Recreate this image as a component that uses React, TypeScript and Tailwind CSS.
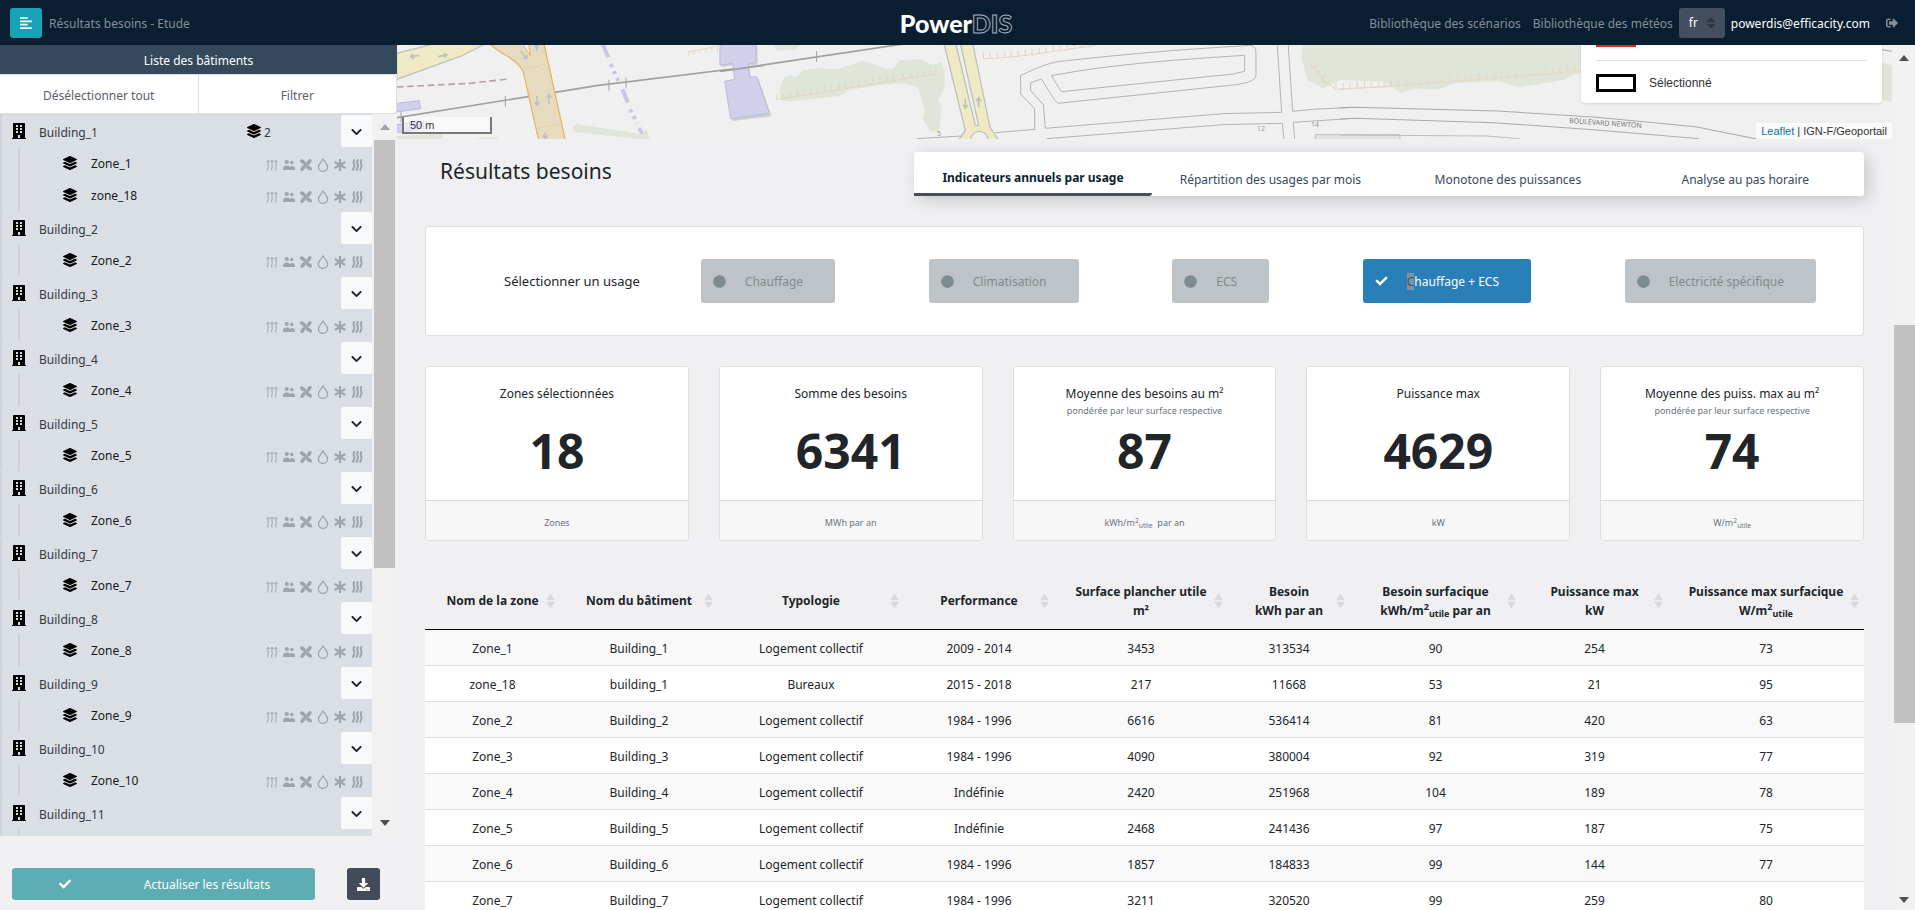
import React, { useState } from 'react';
import {
  FaAlignLeft,
  FaBuilding,
  FaCheck,
  FaChevronDown,
  FaCircle,
  FaDownload,
  FaLayerGroup,
  FaSignOutAlt,
  FaSort,
} from 'react-icons/fa';

interface Building {
  name: string;
  zones: string[];
}

const BUILDINGS: Building[] = [
  { name: 'Building_1', zones: ['Zone_1', 'zone_18'] },
  { name: 'Building_2', zones: ['Zone_2'] },
  { name: 'Building_3', zones: ['Zone_3'] },
  { name: 'Building_4', zones: ['Zone_4'] },
  { name: 'Building_5', zones: ['Zone_5'] },
  { name: 'Building_6', zones: ['Zone_6'] },
  { name: 'Building_7', zones: ['Zone_7'] },
  { name: 'Building_8', zones: ['Zone_8'] },
  { name: 'Building_9', zones: ['Zone_9'] },
  { name: 'Building_10', zones: ['Zone_10'] },
  { name: 'Building_11', zones: [] },
];

const TABS = [
  'Indicateurs annuels par usage',
  'Répartition des usages par mois',
  'Monotone des puissances',
  'Analyse au pas horaire',
];

const USAGES = ['Chauffage', 'Climatisation', 'ECS', 'Chauffage + ECS', 'Electricité spécifique'];

const M2Utile = () => (
  <>
    m<sup>2</sup>
    <sub>utile</sub>
  </>
);

interface Stat {
  title: string;
  note?: string;
  value: string;
  unit: React.ReactNode;
}

const STATS: Stat[] = [
  { title: 'Zones sélectionnées', value: '18', unit: 'Zones' },
  { title: 'Somme des besoins', value: '6341', unit: 'MWh par an' },
  {
    title: 'Moyenne des besoins au m²',
    note: 'pondérée par leur surface respective',
    value: '87',
    unit: <>kWh/<M2Utile />&nbsp; par an</>,
  },
  { title: 'Puissance max', value: '4629', unit: 'kW' },
  {
    title: 'Moyenne des puiss. max au m²',
    note: 'pondérée par leur surface respective',
    value: '74',
    unit: <>W/<M2Utile /></>,
  },
];

const COLUMNS: { label: string; unit?: React.ReactNode; width: string }[] = [
  { label: 'Nom de la zone', width: 'w-[135px]' },
  { label: 'Nom du bâtiment', width: 'w-[158px]' },
  { label: 'Typologie', width: 'w-[186px]' },
  { label: 'Performance', width: 'w-[150px]' },
  { label: 'Surface plancher utile', unit: 'm²', width: 'w-[174px]' },
  { label: 'Besoin', unit: 'kWh par an', width: 'w-[122px]' },
  { label: 'Besoin surfacique', unit: <>kWh/<M2Utile /> par an</>, width: 'w-[171px]' },
  { label: 'Puissance max', unit: 'kW', width: 'w-[147px]' },
  { label: 'Puissance max surfacique', unit: <>W/<M2Utile /></>, width: 'w-[196px]' },
];

const ROWS = [
  ['Zone_1', 'Building_1', 'Logement collectif', '2009 - 2014', '3453', '313534', '90', '254', '73'],
  ['zone_18', 'building_1', 'Bureaux', '2015 - 2018', '217', '11668', '53', '21', '95'],
  ['Zone_2', 'Building_2', 'Logement collectif', '1984 - 1996', '6616', '536414', '81', '420', '63'],
  ['Zone_3', 'Building_3', 'Logement collectif', '1984 - 1996', '4090', '380004', '92', '319', '77'],
  ['Zone_4', 'Building_4', 'Logement collectif', 'Indéfinie', '2420', '251968', '104', '189', '78'],
  ['Zone_5', 'Building_5', 'Logement collectif', 'Indéfinie', '2468', '241436', '97', '187', '75'],
  ['Zone_6', 'Building_6', 'Logement collectif', '1984 - 1996', '1857', '184833', '99', '144', '77'],
  ['Zone_7', 'Building_7', 'Logement collectif', '1984 - 1996', '3211', '320520', '99', '259', '80'],
];

// --- Usage icons ---

const HeatIcon = () => (
  <svg className="w-3 h-3" viewBox="0 0 12 12" fill="none" stroke="currentColor" strokeWidth="1">
    <path d="M2 11.5c-1.400-2 1.200-3.500 0-5.500V1.500M6 11.500c-1.400-2 1.200-3.500 0-5.500V1.500M10 11.500c-1.400-2 1.200-3.500 0-5.500V1.500" />
    <path d="M.5 3 2 1.200 3.500 3M4.500 3 6 1.200 7.500 3M8.500 3 10 1.200 11.500 3" />
  </svg>
);

const PeopleIcon = () => (
  <svg className="w-3 h-3" viewBox="0 0 12 12" fill="currentColor">
    <circle cx="3.800" cy="3" r="2.100" />
    <circle cx="8.800" cy="3.500" r="1.800" />
    <path d="M0 11V9.500c0-1.800 1.600-3 3.800-3 1.400 0 2.500.6 3.200 1.500.6-.7 1.200-1 2-1 1.800 0 3 1 3 2.500V11Z" />
  </svg>
);

const FanIcon = () => (
  <svg className="w-3 h-3" viewBox="0 0 12 12" fill="currentColor">
    <ellipse cx="3" cy="3" rx="3.400" ry="1.900" transform="rotate(35 3 3)" />
    <ellipse cx="9" cy="3" rx="3.400" ry="1.900" transform="rotate(125 9 3)" />
    <ellipse cx="9" cy="9" rx="3.400" ry="1.900" transform="rotate(35 9 9)" />
    <ellipse cx="3" cy="9" rx="3.400" ry="1.900" transform="rotate(125 3 9)" />
    <circle cx="6" cy="6" r="1.800" />
  </svg>
);

const DropIcon = () => (
  <svg className="w-3 h-3.5" viewBox="0 0 12 14" fill="none" stroke="currentColor" strokeWidth="1.300">
    <path d="M6 1C4.500 3.800 1.400 6 1.400 9a4.600 4.400 0 0 0 9.200 0C10.600 6 7.500 3.800 6 1Z" />
  </svg>
);

const ColdIcon = () => (
  <svg className="w-3 h-3" viewBox="0 0 12 12" fill="none" stroke="currentColor" strokeWidth="2.100">
    <path d="M6 0v12M.7 3l10.600 6M11.300 3 .7 9" />
  </svg>
);

const WavesIcon = () => (
  <svg className="w-3 h-3" viewBox="0 0 12 12" fill="none" stroke="currentColor" strokeWidth="2">
    <path d="M3.600.3c-2.800 3.200.6 4.600-.4 7.400-.4 1.400-1 2.500-1.600 4M7.200.3c-2.800 3.200.6 4.600-.4 7.400-.4 1.400-1 2.500-1.600 4M10.800.3c-2.800 3.200.6 4.600-.4 7.400-.4 1.400-1 2.500-1.600 4" />
  </svg>
);

const Arrow = ({ up, className }: { up?: boolean; className: string }) => (
  <svg className={`w-2.5 h-1.5 shrink-0 ${className}`} viewBox="0 0 10 6" fill="currentColor">
    <path d={up ? 'M0 6 5 0l5 6Z' : 'M0 0h10L5 6Z'} />
  </svg>
);

// --- Layout parts ---

const Header = () => (
  <header className="h-[45px] shrink-0 bg-[#0a1e32] flex items-center text-xs text-[#848f99]">
    <div className="flex-1 flex items-center gap-[7px] pl-2.5">
      <button
        aria-label="Menu"
        className="w-8 h-[30px] rounded-[3px] bg-[#17a2b8] text-white flex items-center justify-center"
      >
        <FaAlignLeft className="w-3 h-3.5" />
      </button>
      <span className="pt-0.5">Résultats besoins - Etude</span>
    </div>
    <a href="#" className="pl-1 pt-0.5 font-[Lato] text-[25px] leading-none font-black text-white">
      Power<span className="text-[#0a1e32] [-webkit-text-stroke:1px_#a3adb7]">DIS</span>
    </a>
    <nav className="flex-1 flex items-center justify-end pr-[17px]">
      <a href="#" className="mr-3 pt-0.5">Bibliothèque des scénarios</a>
      <a href="#" className="pt-0.5">Bibliothèque des météos</a>
      <div className="relative mx-1.5">
        <select
          aria-label="Langue"
          defaultValue="fr"
          className="appearance-none w-[46px] h-[30px] pl-2.5 rounded-[3px] bg-[#444e5e] text-white"
        >
          <option value="fr">fr</option>
          <option value="en">en</option>
        </select>
        <FaSort className="absolute right-2 top-2 w-3 h-3.5 text-[#2f3640] pointer-events-none" />
      </div>
      <a href="#" className="text-white mr-4 pt-0.5">powerdis@efficacity.com</a>
      <button aria-label="Déconnexion">
        <FaSignOutAlt className="w-3 h-3" />
      </button>
    </nav>
  </header>
);

const ZoneRow = ({ name }: { name: string }) => (
  <li className="ml-[18px] h-8 border-l-2 border-[#d0d1d2] flex items-center pl-[43px] pr-[9px]">
    <FaLayerGroup className="w-3.5 h-3.5 text-black" />
    <span className="ml-3.5 flex-1 pt-0.5 text-[#16191c]">{name}</span>
    <span className="flex items-center gap-[5px] text-[#a0a4ab] pt-1">
      <HeatIcon />
      <PeopleIcon />
      <FanIcon />
      <DropIcon />
      <ColdIcon />
      <WavesIcon />
    </span>
  </li>
);

const Sidebar = () => (
  <aside className="w-[397px] shrink-0 flex flex-col text-xs">
    <h2 className="h-[29px] shrink-0 pt-0.5 bg-[#34495e] text-white flex items-center justify-center">
      Liste des bâtiments
    </h2>
    <div className="h-10 shrink-0 flex bg-white text-[#5a6067] border border-l-0 border-[#dedfe1] rounded-r">
      <button className="flex-1 pt-1 border-r border-[#dedfe1]">Désélectionner tout</button>
      <button className="flex-1 pt-1">Filtrer</button>
    </div>
    <div className="flex-1 min-h-0 flex">
      <ul className="flex-1 overflow-hidden bg-[#dadfe6] pt-px shadow-[inset_2px_0_2px_rgba(0,0,0,0.06)]">
        {BUILDINGS.map((building) => (
          <li key={building.name} className="border-b border-[#dcdfe2]">
            <div className="h-8 flex items-center pl-3">
              <FaBuilding className="w-3.5 h-4 text-black" />
              <span className="ml-[13px] w-[208px] pt-[3px] text-[#343a40]">{building.name}</span>
              {building.zones.length > 1 && (
                <span className="flex items-center gap-[3px] text-[#343a40]">
                  <FaLayerGroup className="w-3.5 h-3.5 text-black" />
                  <span className="pt-[3px]">{building.zones.length}</span>
                </span>
              )}
              <button
                aria-label={`Replier ${building.name}`}
                className="ml-auto w-[31px] h-8 pt-0.5 rounded-xs bg-[#f8f9fa] text-[#212529] flex items-center justify-center"
              >
                <FaChevronDown className="w-[11px] h-3" />
              </button>
            </div>
            {building.zones.length > 0 ? (
              <ul>
                {building.zones.map((zone) => (
                  <ZoneRow key={zone} name={zone} />
                ))}
              </ul>
            ) : (
              <div className="ml-[18px] h-8 border-l-2 border-[#d0d1d2]" />
            )}
          </li>
        ))}
      </ul>
      <div className="w-[25px] shrink-0 bg-[#f1f1f1] flex flex-col items-center py-2.5">
        <Arrow up className="text-[#a3a3a3]" />
        <div className="mt-2.5 w-[21px] h-[61%] bg-[#c1c1c1]" />
        <Arrow className="mt-auto text-[#505050]" />
      </div>
    </div>
    <div className="h-[74px] shrink-0 flex items-center gap-8 pl-3 pt-[22px]">
      <button className="w-[303px] h-8 rounded-[3px] bg-[#5cadb4] text-white flex items-center">
        <FaCheck className="ml-[47px] w-3 h-3" />
        <span className="flex-1 pl-7 pt-0.5 text-center">Actualiser les résultats</span>
      </button>
      <button
        aria-label="Télécharger"
        className="w-[33px] h-8 rounded-[3px] bg-[#414b5b] text-white flex items-center justify-center"
      >
        <FaDownload className="w-[13px] h-[13px]" />
      </button>
    </div>
  </aside>
);

const MapView = () => (
  <div className="relative h-[94px] mr-px overflow-hidden bg-[#f0f0f0]">
    <svg className="absolute inset-0 w-full h-full" viewBox="0 0 1495 94" preserveAspectRatio="xMinYMin slice" fill="none">
      {/* western part: bridges, railway and avenue */}
      <g transform="translate(-7 -5) scale(.3333)">
        <path d="M20 40 130 12H285L215 48 20 118Z" fill="#eeebc4" stroke="#c0c0c0" strokeWidth="4" />
        <path d="M20 141 240 130 355 117" stroke="#b5a1a5" strokeWidth="5" strokeDasharray="20 11" />
        <path d="M20 190 88 182 92 206 20 216ZM20 254 98 244 102 266 20 278Z" fill="#d0d0ea" stroke="#b9b9e6" strokeWidth="3" />
        <path d="M20 233 620 137 1100 78 1540 12" stroke="#a0a0a0" strokeWidth="5" />
        <path d="M33 215v32M346 168v32M657 120v32M708 113v32M1280 34v32" stroke="#a0a0a0" strokeWidth="3" />
        <path d="M300 12C340 50 375 50 400 95L446 300H526L462 12Z" fill="#e8dcc0" stroke="#e5b766" strokeWidth="4" />
        <path d="M400 16 422 48 416 12" fill="#f0f0f0" stroke="#e5b766" strokeWidth="3" />
        <path d="M404 88 466 72M440 266 516 250" stroke="#e5c8a0" strokeWidth="2" />
        <path
          d="M441 168v26m-7-8 7 10 8-10M477 192v-26m-8 8 8-10 7 10M392 34l18 20m-12 0 12 2 0-12M440 34V14m-6 8 6-8 6 8M466 276v18m-7-8 7 10 8-10M88 46 62 50m8-8-8 8 10 6M144 50l26-5m-9-5 10 5-8 8"
          stroke="#c0c0c8"
          strokeWidth="5"
        />
        <path d="M638 12 655 52M697 148 714 188M748 264 764 298" stroke="#c9c7de" strokeWidth="12" />
        <path d="M662 72 690 134M720 208 742 250" stroke="#c9c7de" strokeWidth="12" strokeDasharray="10 13" />
        <path d="m548 262 12-10 170 26 30 4 8-16 12 30H740L552 276ZM20 288l136-6v18H20ZM250 298l30-6h42v8ZM1150 12h80l-10 16-60 4Z" fill="#dfe5d9" />
        <path d="M994 14V76L1030 70 1036 118 1008 122 1024 238 1142 224 1102 110 1080 112 1074 72 1100 68V14Z" fill="#cfcfcf" transform="translate(3 5)" />
        <path d="M990 12V76L1028 70 1034 118 1004 124 1022 236 1138 220 1100 110 1080 112 1074 72 1098 66V12Z" fill="#d0d0ea" stroke="#b9b9e6" strokeWidth="3" />
        <path d="M990 94 1120 76" stroke="#a0a0a0" strokeWidth="5" />
        <path d="M897 50 894 36 985 18M912 33v10M930 29v10M948 26v10M966 22v10M982 20v16" stroke="#e3d4c2" strokeWidth="3" />
        <path d="M1170 180V140L1184 112 1204 106 1218 112 1240 90 1290 84 1340 88 1420 62 1480 84 1510 86 1530 62H1570V128L1460 136 1380 150 1350 168 1200 184Z" fill="#dfe5d9" />
        <path
          d="M1158 178 1330 152 1560 114M1160 178v-14M1180 176v-14M1201 172v-16M1221 170v-18M1242 166v-20M1262 163v-20M1283 160v-20M1303 156v-18M1324 153v-18M1346 149v-18M1366 146v-18M1386 142v-18M1408 138v-18M1428 135v-18M1450 132v-18M1470 128v-18M1490 125v-18M1510 122v-18M1532 118v-18M1552 115v-18"
          stroke="#e3d4c2"
          strokeWidth="3"
        />
      </g>
      {/* central part: dual road, car park and crossing */}
      <g transform="translate(503 -45) scale(.3333)">
        <path d="M0 180 60 178 98 196 122 186 134 210V264L114 300 124 322 118 394H92L68 358 74 330 54 262 0 248Z" fill="#dfe5d9" />
        <path d="M0 238 110 222M10 236v-14M32 233v-16M52 230v-16M74 227v-16M92 225v-16M108 222v-16" stroke="#e3d4c2" strokeWidth="3" />
        <path d="M132 130 196 392 176 420H296L270 382 218 130Z" fill="#eeebc4" stroke="#c0c0c0" strokeWidth="4" />
        <path d="M168 134 226 376H236L182 134" fill="#f0f0f0" stroke="#c0c0c0" strokeWidth="4" />
        <path d="M212 420a26 26 0 0 1 52 0" fill="#f0f0f0" stroke="#c0c0c0" strokeWidth="4" />
        <path d="M196 296v26m-7-8 7 10 8-10M236 322v-26m-8 8 8-10 7 10" stroke="#c0c0c0" strokeWidth="5" />
        <path d="M50 416 186 408M286 398 404 388V326L362 282V226C430 196 450 186 500 182 700 160 850 148 1040 137 1058 134 1068 140 1068 160V226C1066 244 1040 248 1010 254L474 310 464 300 424 237 392 248V272L430 314 436 385 970 341 1145 337 1132 136" stroke="#b3b3b3" strokeWidth="3" />
        <path d="M454 227C650 190 850 178 1034 166V214L1000 222 484 275ZM440 416 970 374 1147 370 1152 418M1165 136 1178 334 1240 328 1360 322M1184 418 1180 367 1350 356" stroke="#b3b3b3" strokeWidth="3" />
        <path
          d="M250 156V176C350 174 440 156 585 137M270 174v-17M292 174v-17M314 173v-17M334 171v-17M355 169v-17M376 166v-17M396 164v-17M418 161v-17M438 158v-17M460 155v-17M480 152v-14M502 149v-12M524 145v-9M544 142v-7"
          stroke="#e6d3bd"
          strokeWidth="3"
        />
        <path d="M1208 134 1204 170 1222 240 1268 264 1322 240 1440 244V134Z" fill="#dfe5d9" />
        <path
          d="M1232 190 1276 246 1310 268 1500 258M1240 206 1254 196M1252 220 1264 208M1264 236 1278 222M1280 250 1290 238M1308 266v-18M1330 266v-18M1350 265v-18M1372 264v-18M1394 263v-18M1414 262v-18M1436 261v-18M1456 260v-18M1478 259v-18"
          stroke="#e3d4c2"
          strokeWidth="3"
        />
        <path d="M1246 420V404H1500V420Z" fill="#e2e2e2" stroke="#bdbdbd" strokeWidth="3" />
      </g>
      {/* eastern part: woods and boulevard */}
      <g transform="translate(943 -45) scale(.3667 .3333)">
        <path d="M20 134V240L120 244 165 278 210 266 268 268 320 248 430 244 490 262 610 240 640 222H700V134ZM1470 186 1505 196V302H1470Z" fill="#dfe5d9" />
        <path
          d="M0 268 250 250 660 214M120 260v-18M140 258v-18M160 257v-18M180 255v-18M200 254v-18M220 252v-18M240 251v-18M260 249v-18M280 247v-18M300 246v-18M320 244v-18M340 242v-18M360 240v-18M380 238v-18M400 236v-18M420 234v-18M440 232v-18M460 231v-18M480 229v-18M500 227v-18M520 225v-18M540 223v-18M560 222v-18M580 220v-18M600 218v-18M620 216v-18M640 214v-18"
          stroke="#e6d8c6"
          strokeWidth="3"
        />
        <path d="M0 323 40 322 430 333 700 352 970 380 1140 418M0 357 40 355 420 368 700 390 980 416M1478 149 1505 154" stroke="#aaaaaa" strokeWidth="3" />
        <path d="M0 405 400 408 490 416" stroke="#bdbdbd" strokeWidth="3" />
      </g>
      <g fill="#9f978e" className="text-[7px]">
        <text x="540" y="91">5</text>
        <text x="860" y="86">12</text>
        <text x="914" y="82">14</text>
        <text x="1172" y="78" fill="#777" transform="rotate(4 1172 78)">BOULEVARD NEWTON</text>
      </g>
    </svg>
    <div className="absolute left-[5px] bottom-[5px] w-[90px] h-[17px] border-2 border-t-0 border-[#777] bg-white/50 pl-1.5 font-['Liberation_Sans'] text-[11px] leading-4 text-[#333]">
      50 m
    </div>
    <div className="absolute top-0 right-2.5 w-[301px] h-[58px] rounded-b bg-white shadow-sm px-[15px] font-['Liberation_Sans'] text-xs text-[#333]">
      <div className="w-10 h-0.5 bg-[#e02b27]" />
      <hr className="mt-[13px] border-[#e2e2e2]" />
      <div className="mt-[13px] flex items-center gap-[13px]">
        <span className="w-10 h-[18px] border-[3px] border-black" />
        Sélectionné
      </div>
    </div>
    <div className="absolute right-0 bottom-0 h-4 px-[5px] bg-white/70 font-['Liberation_Sans'] text-[11px] leading-4 text-[#333]">
      <a href="#" className="text-[#0078a8]">Leaflet</a> | IGN-F/Geoportail
    </div>
  </div>
);

const StatCard = ({ title, note, value, unit }: Stat) => (
  <div className="h-[175px] rounded-[3px] border border-[#dfdfdf] bg-white flex flex-col text-center overflow-hidden">
    <div className="flex-1 pt-[18px]">
      <p className="text-xs leading-[18px] text-[#212529]">{title}</p>
      <p className="h-4 text-[9px] leading-4 text-[#6c757d]">{note}</p>
      <p className="mt-1.5 text-5xl leading-[52px] font-bold text-[#212529]">{value}</p>
    </div>
    <div className="h-10 pt-0.5 border-t border-[#d9d9d9] bg-[#f7f7f7] text-[9px] leading-10 text-[#6c757d]">{unit}</div>
  </div>
);

const ResultsTable = () => (
  <table className="mt-8 w-full table-fixed border-collapse text-xs text-center text-[#212529]">
    <thead>
      <tr className="h-[56px] border-b border-black">
        {COLUMNS.map((col) => (
          <th key={col.label} className={`relative p-0 font-bold leading-[19px] ${col.width}`}>
            {col.label}
            {col.unit && <div>{col.unit}</div>}
            <span className="absolute right-[5px] top-1/2 -translate-y-1/2 flex flex-col gap-px text-[#d9d9db]">
              <svg className="w-[9px] h-[7px]" viewBox="0 0 8 7" preserveAspectRatio="none" fill="currentColor">
                <path d="M0 7 4 0l4 7Z" />
              </svg>
              <svg className="w-[9px] h-[7px]" viewBox="0 0 8 7" preserveAspectRatio="none" fill="currentColor">
                <path d="M0 0h8L4 7Z" />
              </svg>
            </span>
          </th>
        ))}
      </tr>
    </thead>
    <tbody>
      {ROWS.map((row) => (
        <tr key={row[0]} className="h-9 border-b border-[#dcdddf] odd:bg-[#f9f9f9] even:bg-white">
          {row.map((cell, i) => (
            <td key={i} className="p-0 pt-1">{cell}</td>
          ))}
        </tr>
      ))}
    </tbody>
  </table>
);

export default function App() {
  const [tab, setTab] = useState(TABS[0]);
  const [usage, setUsage] = useState('Chauffage + ECS');

  return (
    <div className="h-screen flex flex-col overflow-hidden bg-[#f0f0f3] font-['Noto_Sans',sans-serif]">
      <Header />
      <div className="flex-1 min-h-0 flex">
        <Sidebar />
        <main className="flex-1 min-w-0 overflow-hidden">
          <MapView />
          <div className="pl-7 pr-[29px]">
            <div className="pt-[13px] flex items-start justify-between">
              <h1 className="pl-[15px] pt-[3px] text-[21px] leading-8 text-[#212529]">Résultats besoins</h1>
              <div role="tablist" className="w-[66%] h-11 flex bg-white rounded-[3px] text-xs shadow-[4px_4px_16px_rgba(0,0,0,0.18)]">
                {TABS.map((label) => (
                  <button
                    key={label}
                    role="tab"
                    aria-selected={tab === label}
                    onClick={() => setTab(label)}
                    className={
                      tab === label
                        ? 'flex-1 pt-2.5 border-b-3 border-[#444e5e] rounded-br-[3px] font-bold text-[#0a1e32]'
                        : 'flex-1 pt-3 text-[#34495e]'
                    }
                  >
                    {label}
                  </button>
                ))}
              </div>
            </div>

            <div className="mt-[30px] h-[110px] rounded-[3px] border border-[#dfdfdf] bg-white flex items-center pl-[78px] pr-[47px] text-xs">
              <span className="pt-0.5 text-[13px] text-[#212529]">Sélectionner un usage</span>
              <div className="ml-[61px] flex-1 flex justify-between">
                {USAGES.map((label) => {
                  const active = usage === label;
                  return (
                    <button
                      key={label}
                      aria-pressed={active}
                      onClick={() => setUsage(label)}
                      className={`h-11 pl-3 pr-8 rounded-[3px] flex items-center gap-[19px] ${
                        active ? 'bg-[#2980b9] text-white' : 'bg-[#bdc3c7] text-[#7f8c8d]'
                      }`}
                    >
                      {active ? <FaCheck className="w-[13px] h-3" /> : <FaCircle className="w-[13px] h-[13px]" />}
                      <span className="pt-px">
                        <span className={active ? 'bg-[#7d93a3] text-[#45525c]' : ''}>{label[0]}</span>
                        {label.slice(1)}
                      </span>
                    </button>
                  );
                })}
              </div>
            </div>

            <div className="mt-[30px] grid grid-cols-5 gap-[30px]">
              {STATS.map((stat) => (
                <StatCard key={stat.title} {...stat} />
              ))}
            </div>

            <ResultsTable />
          </div>
        </main>
        <div className="w-[22px] shrink-0 bg-[#f1f1f1] flex flex-col items-center pt-2.5 pb-[7px]">
          <Arrow up className="text-[#505050]" />
          <div className="grow-[264]" />
          <div className="w-full pl-px grow-[398] flex">
            <div className="flex-1 bg-[#c1c1c1]" />
          </div>
          <div className="grow-[174]" />
          <Arrow className="text-[#505050]" />
        </div>
      </div>
    </div>
  );
}
